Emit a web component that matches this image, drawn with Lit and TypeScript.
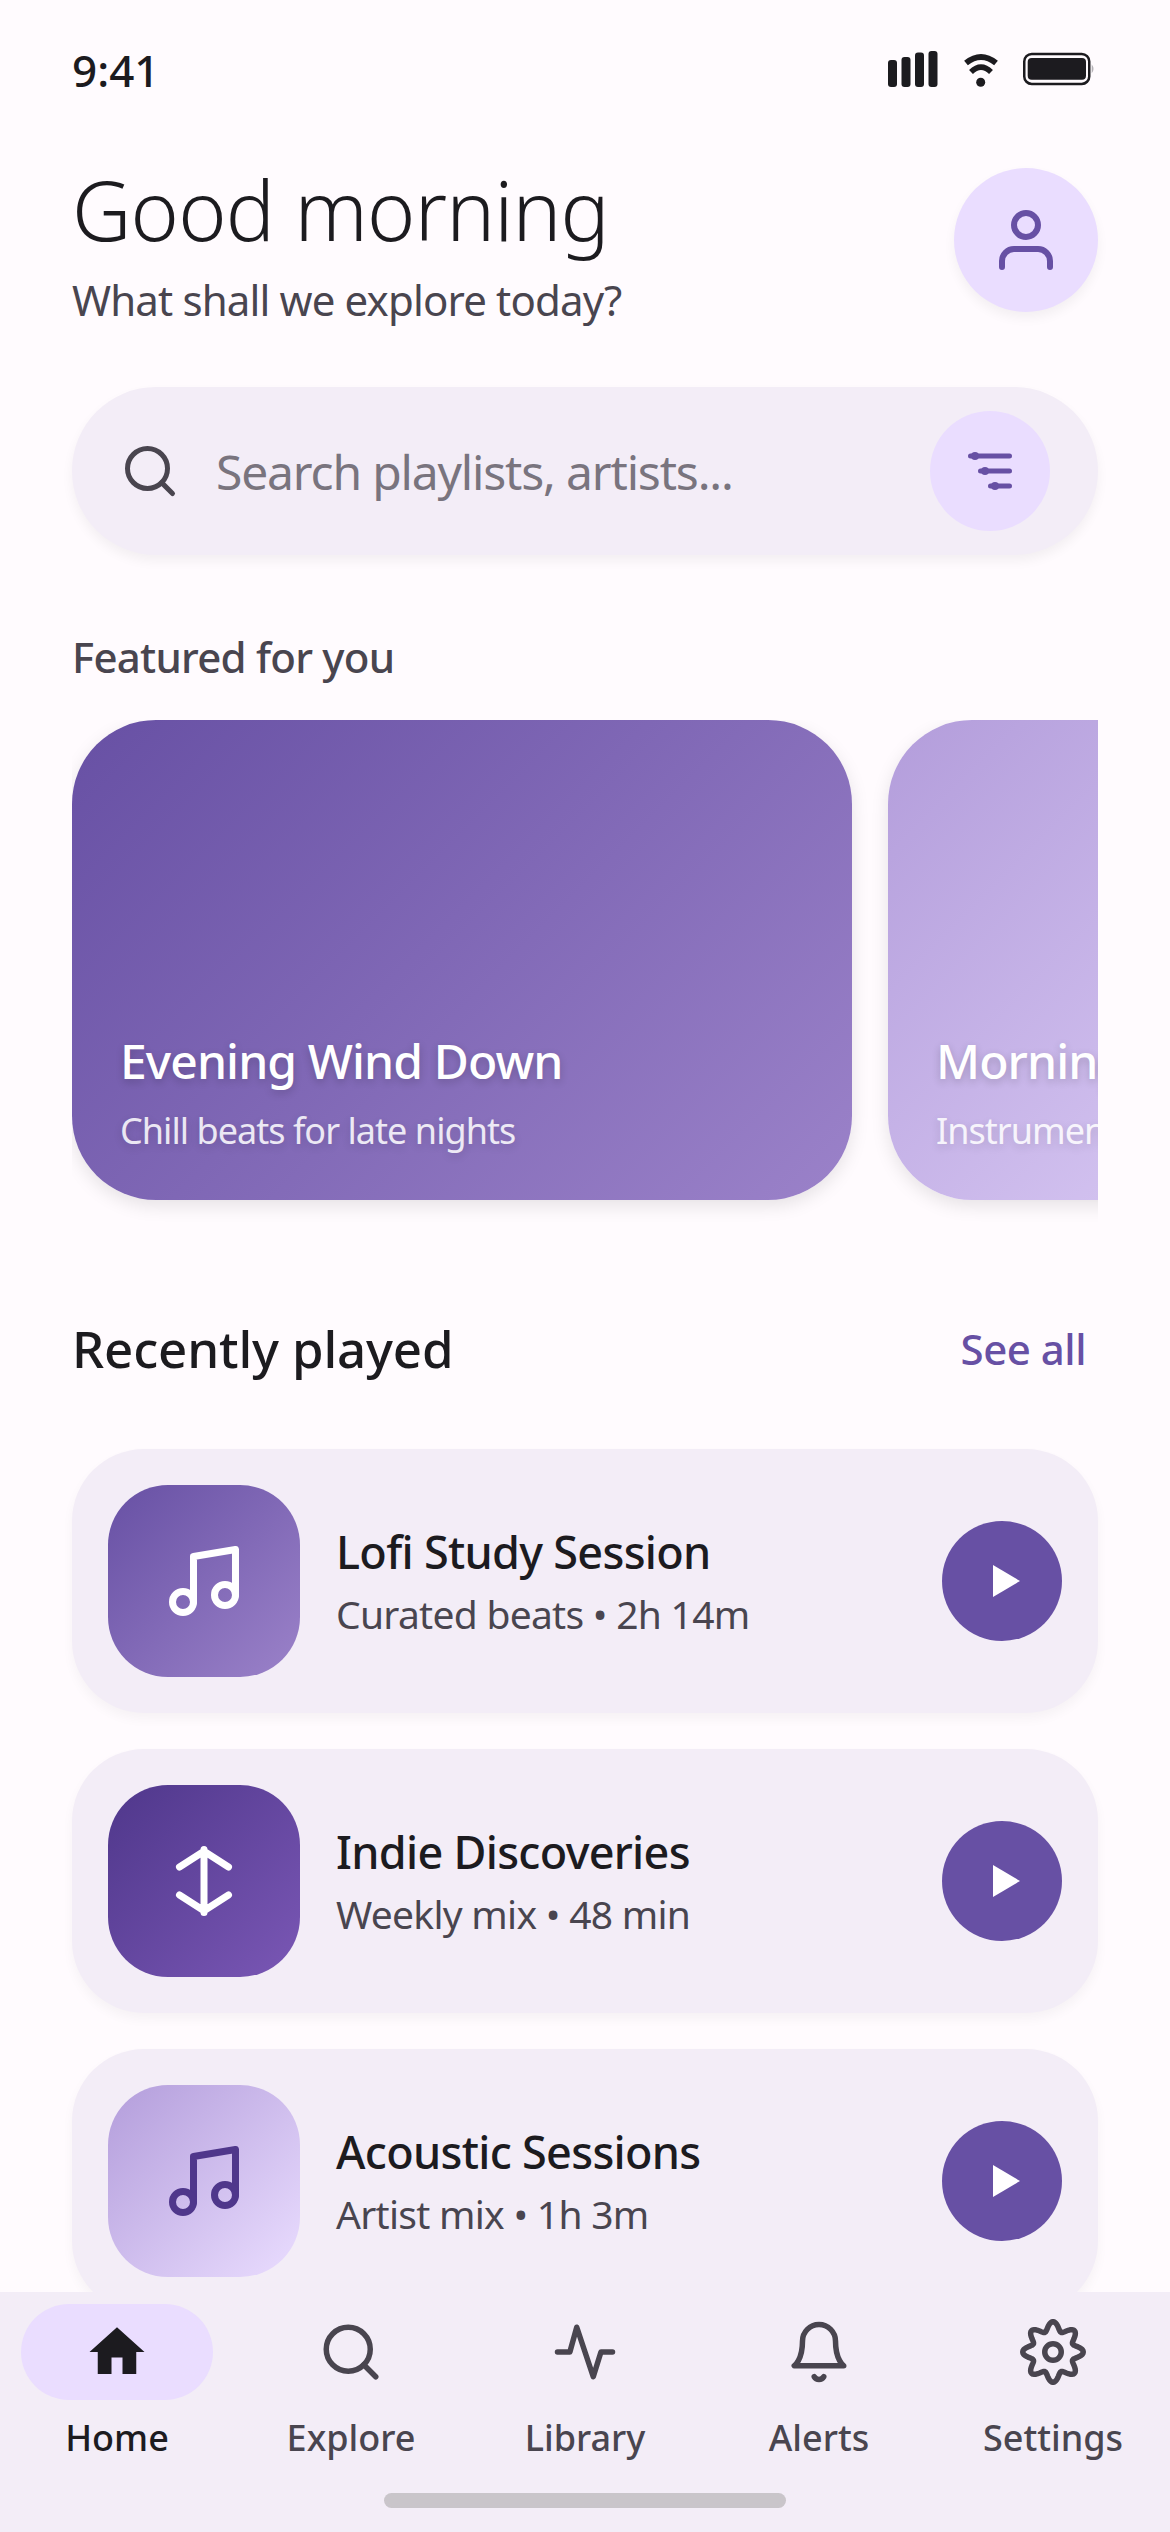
import { LitElement, html, css, svg } from "lit";
import { customElement } from "lit/decorators.js";

const FONT = css`"Noto Sans", "Open Sans", sans-serif`;

const icon = (size: number, content: unknown) => html`<svg width=${size} height=${size} viewBox="0 0 24 24" fill="none" stroke="currentColor" stroke-width="2" stroke-linecap="round" stroke-linejoin="round">${content}</svg>`;

const gearPath = (() => {
  const pts: string[] = [];
  for (let i = 0; i < 144; i++) {
    const t = (i / 144) * Math.PI * 2;
    const r = 9.35 + 1.65 * Math.cos(8 * t);
    pts.push(`${(12 + r * Math.sin(t)).toFixed(2)} ${(12 - r * Math.cos(t)).toFixed(2)}`);
  }
  return `M${pts.join("L")}Z`;
})();

const music = svg`<path d="M9 18V5l12-2v13"/><circle cx="6" cy="18" r="3"/><circle cx="18" cy="16" r="3"/>`;
const updown = svg`<path d="M12 3v18M5 8l7-4.5L19 8M5 16l7 4.5 7-4.5"/>`;
const search = svg`<circle cx="11" cy="11" r="8"/><path d="M21 21l-4.35-4.35"/>`;
const pulse = svg`<path d="M2 12h4.500L9 3l6 18 2.800-9H22"/>`;
const bell = svg`<path d="M18 8A6 6 0 0 0 6 8c0 7-3 9-3 9h18s-3-2-3-9"/><path d="M13.730 21a2 2 0 0 1-3.460 0"/>`;
const gear = svg`<circle cx="12" cy="12" r="3"/><path d=${gearPath}/>`;
const person = svg`<circle cx="12" cy="7" r="4"/><path d="M4 21v-2a4 4 0 0 1 4-4h8a4 4 0 0 1 4 4v2"/>`;

@customElement("app-root")
export class AppRoot extends LitElement {
  static styles = css`
    :host { display: block; width: 1170px; height: 2532px; background: #fffbfe; font-family: ${FONT}; color: #1c1b1f; position: relative; overflow: hidden; }
    .status { height: 142px; display: flex; justify-content: space-between; align-items: flex-start; padding: 44px 72px 0; box-sizing: border-box; }
    .time { font-size: 44px; font-weight: 500; line-height: 52px; }
    .sicons { display: flex; gap: 24px; margin-top: 7px; margin-right: 2px; }
    .header { display: flex; justify-content: space-between; padding: 17px 72px 0; height: 245px; box-sizing: border-box; }
    h1 { margin: 0; font-size: 82px; font-weight: 300; line-height: 100px; letter-spacing: -0.8px; }
    .sub { font-size: 42px; line-height: 56px; color: #49454f; margin-top: 12.500px; letter-spacing: -0.85px; }
    .avatar { width: 144px; height: 144px; margin-top: 9px; border-radius: 50%; background: #eaddff; color: #6750a4; display: flex; align-items: center; justify-content: center; box-shadow: 0 6px 12px rgba(0,0,0,.05); }
    .search { margin: 0 72px; height: 168px; border-radius: 84px; background: #f3edf7; display: flex; align-items: center; padding: 0 48px; box-shadow: 0 6px 12px rgba(0,0,0,.05); color: #49454f; }
    .search .ph { flex: 1; font-size: 48px; color: #79747e; margin-left: 36px; letter-spacing: -1.17px; }
    .fbtn { width: 120px; height: 120px; border-radius: 50%; background: #eaddff; color: #6750a4; display: flex; align-items: center; justify-content: center; }
    .flabel { font-size: 42px; font-weight: 500; color: #49454f; margin: 74px 72px 0; line-height: 56px; letter-spacing: -0.75px; }
    .carousel { margin: 35px 72px 0; display: flex; gap: 36px; overflow: hidden; padding-bottom: 40px; }
    .fcard { flex: 0 0 780px; height: 480px; border-radius: 84px; box-sizing: border-box; padding: 0 48px 44px; display: flex; flex-direction: column; justify-content: flex-end; color: #fff; box-shadow: 0 6px 18px rgba(0,0,0,.1); }
    .c1 { background: linear-gradient(135deg, #6750a4, #9b82c9); }
    .c2 { background: linear-gradient(135deg, #b39ddb, #eaddff); }
    .ft { font-size: 48px; font-weight: 500; line-height: 64px; white-space: nowrap; letter-spacing: -0.9px; text-shadow: 0 3px 9px rgba(0,0,0,.2); }
    .fs { font-size: 36px; line-height: 50px; opacity: .85; white-space: nowrap; margin-top: 13px; letter-spacing: -0.96px; text-shadow: 0 3px 9px rgba(0,0,0,.15); }
    .rhead { margin: 75px 72px 0; display: flex; justify-content: space-between; align-items: center; height: 66px; }
    .rtitle { font-size: 51px; font-weight: 500; letter-spacing: -0.15px; }
    .see { font-size: 42px; font-weight: 500; color: #6750a4; padding-right: 12px; letter-spacing: -0.5px; }
    .list { margin: 68px 72px 0; display: flex; flex-direction: column; gap: 36px; }
    .row { height: 264px; border-radius: 72px; background: #f3edf7; display: flex; align-items: center; padding: 0 36px; box-shadow: 0 6px 12px rgba(0,0,0,.04); }
    .tile { width: 192px; height: 192px; border-radius: 60px; display: flex; align-items: center; justify-content: center; color: #fff; flex: none; }
    .t1 { background: linear-gradient(135deg, #6750a4, #9b82c9); }
    .t2 { background: linear-gradient(135deg, #4f378b, #7a57b5); }
    .t3 { background: linear-gradient(135deg, #b39ddb, #eaddff); color: #4f378b; }
    .info { flex: 1; margin-left: 36px; }
    .rt { font-size: 45px; font-weight: 500; line-height: 58px; letter-spacing: -0.7px; }
    .rs { font-size: 39px; line-height: 50px; color: #49454f; margin-top: 8px; letter-spacing: -0.72px; }
    .play { width: 120px; height: 120px; border-radius: 50%; background: #6750a4; display: flex; align-items: center; justify-content: center; }
    .nav { position: absolute; left: 0; right: 0; bottom: 0; height: 240px; background: #f3edf7; display: grid; grid-template-columns: repeat(5, 234px); padding-top: 12px; box-sizing: border-box; align-items: start; }
    .ni { display: flex; flex-direction: column; align-items: center; color: #49454f; font-size: 36px; font-weight: 500; }
    .pill { width: 192px; height: 96px; border-radius: 48px; display: flex; align-items: center; justify-content: center; }
    .ni.on { color: #1c1b1f; }
    .ni.on .pill { background: #eaddff; }
    .ni span { margin-top: 13px; line-height: 50px; }
    .hb { position: absolute; left: 384px; top: 201px; width: 402px; height: 15px; border-radius: 8px; background: #c9c5ca; }
  `;

  render() {
    const rows = [
      ["t1", music, "Lofi Study Session", "Curated beats • 2h 14m"],
      ["t2", updown, "Indie Discoveries", "Weekly mix • 48 min"],
      ["t3", music, "Acoustic Sessions", "Artist mix • 1h 3m"],
    ] as const;
    const nav = [["Explore", search], ["Library", pulse], ["Alerts", bell], ["Settings", gear]] as const;
    return html`
      <div class="status"><div class="time">9:41</div>
        <div class="sicons">
          <svg width="51" height="36" viewBox="0 0 51 36" fill="#1c1b1f"><rect x="0" y="9" width="9" height="27" rx="3"/><rect x="13.500" y="6" width="9" height="30" rx="3"/><rect x="27" y="1.500" width="9" height="34.500" rx="3"/><rect x="40.500" y="0" width="9" height="36" rx="3"/></svg>
          <svg width="36" height="36" viewBox="0 -3 36 36" fill="none" stroke="#1c1b1f" stroke-width="6"><path d="M3 9Q18 -3 33 9"/><path d="M8 18Q18 8 28 18" stroke-width="5.500"/><circle cx="17.700" cy="28.300" r="4.500" fill="#1c1b1f" stroke="none"/></svg>
          <svg width="73" height="36" viewBox="0 -1.700 73 36"><rect x="1.250" y="1.250" width="65" height="30" rx="7.500" fill="none" stroke="#1c1b1f" stroke-width="2.500"/><rect x="4.700" y="5.300" width="58.300" height="21.700" rx="4" fill="#1c1b1f"/><path d="M68.700 11.600q3.600 5 0 9z" fill="#b4b1b6"/></svg>
        </div>
      </div>
      <div class="header">
        <div><h1>Good morning</h1><div class="sub">What shall we explore today?</div></div>
        <div class="avatar">${icon(72, person)}</div>
      </div>
      <div class="search">${icon(60, search)}<div class="ph">Search playlists, artists...</div>
        <div class="fbtn"><svg width="60" height="60" viewBox="0 0 60 60" fill="none" stroke="currentColor" stroke-width="5" stroke-linecap="round"><path d="M10.500 15h39M20.500 30h29M30.500 45h19"/><g fill="currentColor" stroke="none"><circle cx="15" cy="15" r="4"/><circle cx="25" cy="30" r="4"/><circle cx="35" cy="45" r="4"/></g></svg></div>
      </div>
      <div class="flabel">Featured for you</div>
      <div class="carousel">
        <div class="fcard c1"><div class="ft">Evening Wind Down</div><div class="fs">Chill beats for late nights</div></div>
        <div class="fcard c2"><div class="ft">Morning Focus</div><div class="fs">Instrumental calm</div></div>
      </div>
      <div class="rhead"><div class="rtitle">Recently played</div><div class="see">See all</div></div>
      <div class="list">
        ${rows.map(([c, ic, t, s]) => html`<div class="row"><div class="tile ${c}">${icon(84, ic)}</div><div class="info"><div class="rt">${t}</div><div class="rs">${s}</div></div><div class="play"><svg width="42" height="42" viewBox="0 0 42 42"><path d="M12 5l27 16-27 16z" fill="#fff"/></svg></div></div>`)}
      </div>
      <div class="nav">
        <div class="ni on"><div class="pill"><svg width="66" height="66" viewBox="0 0 24 24" fill="currentColor"><path d="M10 20v-6h4v6h5v-8h3L12 3 2 12h3v8z"/></svg></div><span>Home</span></div>
        ${nav.map(([l, ic]) => html`<div class="ni"><div class="pill">${icon(66, ic)}</div><span>${l}</span></div>`)}
        <div class="hb"></div>
      </div>
    `;
  }
}
